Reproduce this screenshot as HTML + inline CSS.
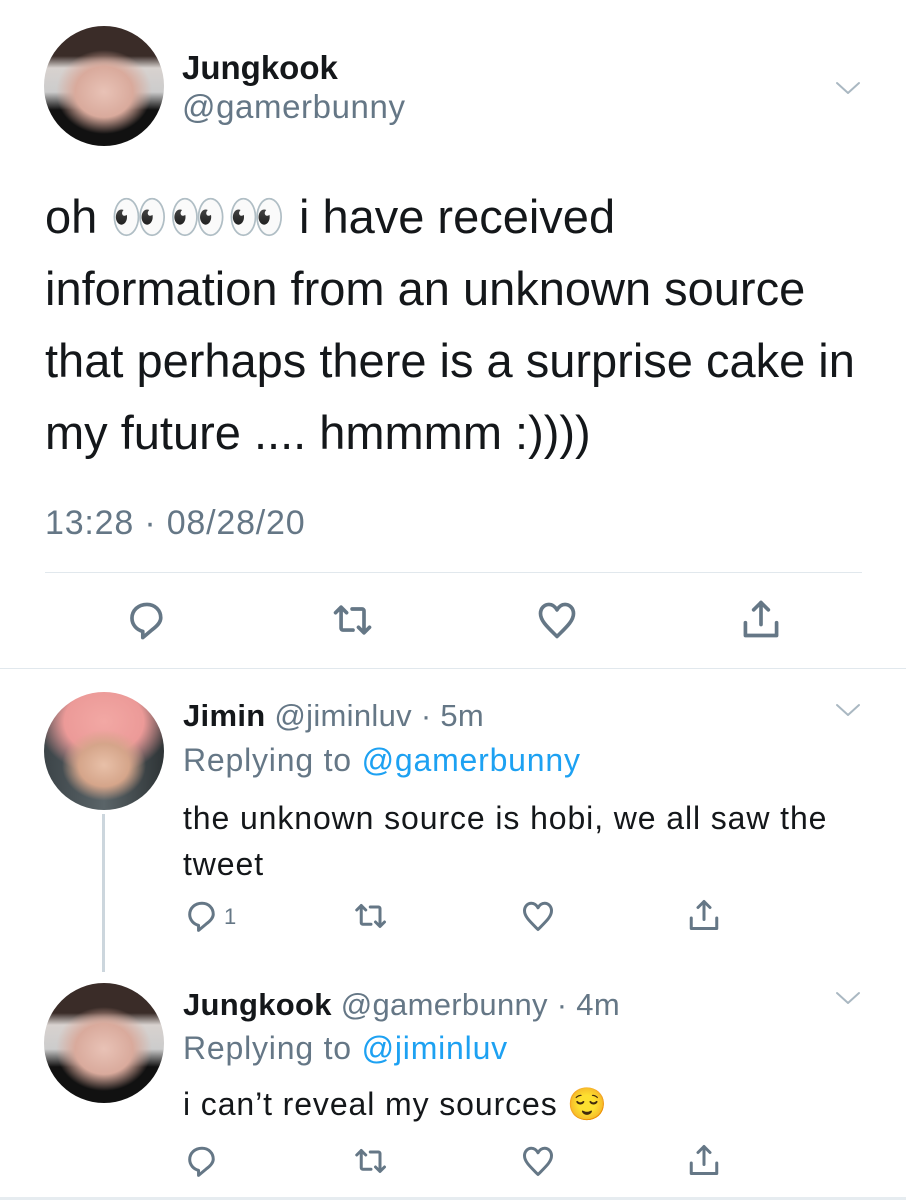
<!DOCTYPE html>
<html><head><meta charset="utf-8"><style>
body{margin:0;width:906px;height:1200px;background:#fff;position:relative;overflow:hidden;font-family:"Liberation Sans",sans-serif;}
.a{position:absolute;white-space:nowrap;line-height:1}
.g{color:#657786}.b{color:#1da1f2}
svg{position:absolute;fill:none;stroke:#657786;stroke-width:2;stroke-linecap:round;stroke-linejoin:round}
.av{position:absolute;border-radius:50%;overflow:hidden}
</style></head><body>
<div class="av" style="left:44px;top:26px;width:120px;height:120px;background:radial-gradient(ellipse 40% 35% at 50% 55%,#e8c2b6 0,#d9aa9c 60%,transparent 100%),linear-gradient(#3a2c28 0,#3a2c28 25%,#d8d2cf 35%,#ccc 55%,#111 70%,#111 100%)"></div>
<div class="a" style="left:182px;top:51px;font-size:33px;font-weight:bold;color:#14171a">Jungkook</div>
<div class="a g" style="left:182px;top:90px;font-size:33px;letter-spacing:0.6px">@gamerbunny</div>
<svg style="left:834px;top:78px" width="28" height="20" viewBox="0 0 28 20"><path d="M3 5l11 10 11-10" stroke="#aab8c2"/></svg>
<div class="a" style="left:45px;top:181px;font-size:47px;line-height:72px;color:#14171a;white-space:normal;width:850px">oh 👀👀👀 i have received<br>information from an unknown source<br>that perhaps there is a surprise cake in<br>my future .... hmmmm :))))</div>
<div class="a g" style="left:45px;top:506px;font-size:34px;letter-spacing:0.8px">13:28 · 08/28/20</div>
<div style="position:absolute;left:45px;top:572px;width:817px;height:1px;background:#e1e8ed"></div>
<svg style="left:125px;top:598px" width="44" height="44" viewBox="0 0 24 24"><path d="M12 3.5c-4.8 0-8.2 3.3-8.2 7.5 0 3.6 2.6 6.4 5.9 7.2V21.6l5-4.2c2.7-2 4.8-4 4.8-6.6C19.5 6.7 16.4 3.5 12 3.5z"/></svg>
<svg style="left:330px;top:598px" width="46" height="44" viewBox="0 0 24 24"><path d="M5.5 5v11.5a1 1 0 001 1h5.5M2.5 8l3-3 3 3M11.5 6h5.5a1 1 0 011 1v11.5M15 16l3 3 3-3"/></svg>
<svg style="left:535px;top:598px" width="44" height="44" viewBox="0 0 24 24"><path d="M12 21C7 16 3 12.5 3 8.5 3 5.5 5.2 3.5 7.6 3.5c2 0 3.4 1.2 4.4 3 1-1.8 2.4-3 4.4-3 2.4 0 4.6 2 4.6 5 0 4-4 7.5-9 12.5z"/></svg>
<svg style="left:739px;top:596px" width="44" height="46" viewBox="0 0 24 24"><path d="M12 3v12M8 7l4-4 4 4M3.5 14v7h17v-7"/></svg>
<div style="position:absolute;left:0;top:668px;width:906px;height:1px;background:#e1e8ed"></div>

<div class="av" style="left:44px;top:692px;width:120px;height:118px;background:radial-gradient(ellipse 35% 30% at 50% 62%,#e8c0a8 0,#d5a58a 60%,transparent 100%),radial-gradient(ellipse 55% 45% at 50% 25%,#f2a8a4 0,#ec9a98 60%,transparent 100%),linear-gradient(90deg,#3c4448,#5a6468 50%,#2e3436)"></div>
<div style="position:absolute;left:102px;top:814px;width:3px;height:158px;background:#ccd6dd"></div>
<div class="a" style="left:183px;top:700px;font-size:31px;letter-spacing:0.3px"><b style="color:#14171a">Jimin</b> <span class="g">@jiminluv · 5m</span></div>
<svg style="left:834px;top:700px" width="28" height="20" viewBox="0 0 28 20"><path d="M3 5l11 10 11-10" stroke="#aab8c2"/></svg>
<div class="a g" style="left:183px;top:744px;font-size:32px;letter-spacing:0.8px">Replying to <span class="b">@gamerbunny</span></div>
<div class="a" style="left:183px;top:795px;font-size:32px;line-height:46px;color:#14171a;letter-spacing:0.9px">the unknown source is hobi, we all saw the<br>tweet</div>
<svg style="left:184px;top:898px" width="36" height="36" viewBox="0 0 24 24"><path d="M12 3.5c-4.8 0-8.2 3.3-8.2 7.5 0 3.6 2.6 6.4 5.9 7.2V21.6l5-4.2c2.7-2 4.8-4 4.8-6.6C19.5 6.7 16.4 3.5 12 3.5z"/></svg>
<div class="a g" style="left:224px;top:906px;font-size:22px">1</div>
<svg style="left:352px;top:898px" width="38" height="36" viewBox="0 0 24 24"><path d="M5.5 5v11.5a1 1 0 001 1h5.5M2.5 8l3-3 3 3M11.5 6h5.5a1 1 0 011 1v11.5M15 16l3 3 3-3"/></svg>
<svg style="left:520px;top:898px" width="36" height="36" viewBox="0 0 24 24"><path d="M12 21C7 16 3 12.5 3 8.5 3 5.5 5.2 3.5 7.6 3.5c2 0 3.4 1.2 4.4 3 1-1.8 2.4-3 4.4-3 2.4 0 4.6 2 4.6 5 0 4-4 7.5-9 12.5z"/></svg>
<svg style="left:686px;top:896px" width="36" height="38" viewBox="0 0 24 24"><path d="M12 3v12M8 7l4-4 4 4M3.5 14v7h17v-7"/></svg>

<div class="av" style="left:44px;top:983px;width:120px;height:120px;background:radial-gradient(ellipse 40% 35% at 50% 55%,#e8c2b6 0,#d9aa9c 60%,transparent 100%),linear-gradient(#3a2c28 0,#3a2c28 25%,#d8d2cf 35%,#ccc 55%,#111 70%,#111 100%)"></div>
<div class="a" style="left:183px;top:989px;font-size:31px;letter-spacing:0.3px"><b style="color:#14171a">Jungkook</b> <span class="g">@gamerbunny · 4m</span></div>
<svg style="left:834px;top:988px" width="28" height="20" viewBox="0 0 28 20"><path d="M3 5l11 10 11-10" stroke="#aab8c2"/></svg>
<div class="a g" style="left:183px;top:1032px;font-size:32px;letter-spacing:0.8px">Replying to <span class="b">@jiminluv</span></div>
<div class="a" style="left:183px;top:1088px;font-size:32px;color:#14171a;letter-spacing:0.9px">i can’t reveal my sources 😌</div>
<svg style="left:184px;top:1143px" width="36" height="36" viewBox="0 0 24 24"><path d="M12 3.5c-4.8 0-8.2 3.3-8.2 7.5 0 3.6 2.6 6.4 5.9 7.2V21.6l5-4.2c2.7-2 4.8-4 4.8-6.6C19.5 6.7 16.4 3.5 12 3.5z"/></svg>
<svg style="left:352px;top:1143px" width="38" height="36" viewBox="0 0 24 24"><path d="M5.5 5v11.5a1 1 0 001 1h5.5M2.5 8l3-3 3 3M11.5 6h5.5a1 1 0 011 1v11.5M15 16l3 3 3-3"/></svg>
<svg style="left:520px;top:1143px" width="36" height="36" viewBox="0 0 24 24"><path d="M12 21C7 16 3 12.5 3 8.5 3 5.5 5.2 3.5 7.6 3.5c2 0 3.4 1.2 4.4 3 1-1.8 2.4-3 4.4-3 2.4 0 4.6 2 4.6 5 0 4-4 7.5-9 12.5z"/></svg>
<svg style="left:686px;top:1141px" width="36" height="38" viewBox="0 0 24 24"><path d="M12 3v12M8 7l4-4 4 4M3.5 14v7h17v-7"/></svg>
<div style="position:absolute;left:0;top:1197px;width:906px;height:3px;background:#e6ecf0"></div>
</body></html>
